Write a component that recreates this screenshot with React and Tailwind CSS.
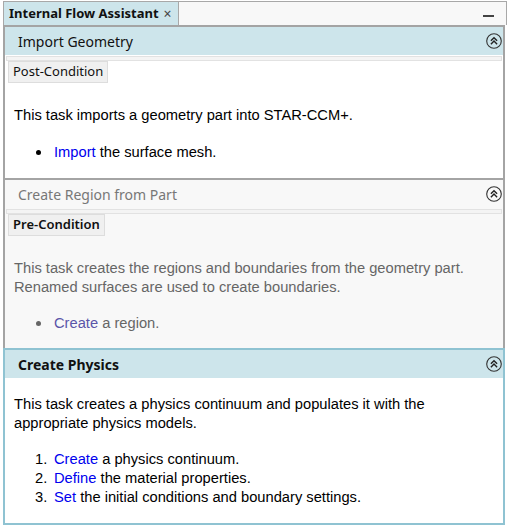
import React from 'react';

const ui = { fontFamily: '"Segoe UI", "Noto Sans", sans-serif' };
const body = { fontFamily: '"Liberation Sans", Arial, sans-serif' };

function CollapseIcon() {
  return (
    <svg width="16" height="16" viewBox="0 0 16 16" className="shrink-0">
      <circle cx="8" cy="8" r="7.3" fill="none" stroke="#333" strokeWidth="1.1" />
      <path d="M4.9 7.8 L8 4.7 L11.1 7.8 M4.9 11.2 L8 8.1 L11.1 11.2" fill="none" stroke="#222" strokeWidth="1.4" />
    </svg>
  );
}

function Header({ title, bg, color, bold }) {
  return (
    <div className={`flex h-[28px] items-center justify-between pl-[13px] pr-[1px] ${bg}`}>
      <span style={ui} className={`text-[14px] ${color} ${bold ? 'font-bold' : ''}`}>{title}</span>
      <CollapseIcon />
    </div>
  );
}

function Strip() {
  return <div className="mx-[1px] mt-[1px] h-[5px] border border-[#e2e2e2] bg-[#f4f4f4]" />;
}

function Tag({ label, bold }) {
  return (
    <div className="flex">
      <div
        style={ui}
        className={`ml-[3px] flex h-[22px] items-center border border-[#dddddd] bg-[#f0f0f0] px-[4px] text-[13px] text-[#111] ${bold ? 'font-semibold' : ''}`}
      >
        {label}
      </div>
    </div>
  );
}

export default function App() {
  return (
    <div className="relative h-[528px] w-[508px] overflow-hidden bg-white">
      {/* tab bar */}
      <div className="ml-[3px] mr-[1px] mt-[1px] flex h-[24px] border-x border-t border-[#a8a8a8] bg-[#f8f8f8]">
        <div style={ui} className="flex items-center gap-[5px] border-r border-[#a8a8a8] bg-[#cde5eb] pl-[5px] pr-[6px] text-[13px] font-bold text-[#111]">
          Internal Flow Assistant
          <span className="text-[14px] font-normal text-[#444]">×</span>
        </div>
        <div className="flex-1" />
        <div className="mr-[12px] mt-[13px] h-[2px] w-[11px] bg-[#444]" />
      </div>

      <div className="ml-[3px] w-[502px] border-x-2 border-t-2 border-[#a4a4a4]">
        {/* Import Geometry */}
        <div className="border-b-2 border-[#a4a4a4] bg-white pb-[16px]">
          <Header title="Import Geometry" bg="bg-[#cde5eb]" color="text-[#111]" />
          <Strip />
          <Tag label="Post-Condition" />
          <p style={body} className="mt-[23px] pl-[9px] text-[14.7px] leading-[19px] text-black">
            This task imports a geometry part into STAR-CCM+.
          </p>
          <ul style={body} className="mt-[18px] pl-[49px] text-[14.7px] leading-[19px] text-black">
            <li className="relative">
              <span className="absolute left-[-18px] top-[7px] h-[5px] w-[5px] rounded-full bg-black" />
              <span className="text-[#0000ee]">Import</span> the surface mesh.
            </li>
          </ul>
        </div>

        {/* Create Region from Part */}
        <div className="bg-[#f8f8f8] pb-[15px]">
          <Header title="Create Region from Part" bg="bg-[#f8f8f8]" color="text-[#777]" />
          <Strip />
          <Tag label="Pre-Condition" bold />
          <p style={body} className="mt-[23px] pl-[9px] text-[14.7px] leading-[19px] text-[#666]">
            This task creates the regions and boundaries from the geometry part.
            <br />
            Renamed surfaces are used to create boundaries.
          </p>
          <ul style={body} className="mt-[17px] pl-[49px] text-[14.7px] leading-[19px] text-[#666]">
            <li className="relative">
              <span className="absolute left-[-18px] top-[7px] h-[5px] w-[5px] rounded-full bg-[#666]" />
              <span className="text-[#5a55a8]">Create</span> a region.
            </li>
          </ul>
        </div>
      </div>

      {/* Create Physics */}
      <div className="ml-[3px] w-[502px] border-2 border-[#8fc3d2] bg-white pb-[16px]">
        <Header title="Create Physics" bg="bg-[#cde5eb]" color="text-[#111]" bold />
        <p style={body} className="mt-[17px] pl-[9px] text-[14.7px] leading-[19px] text-black">
          This task creates a physics continuum and populates it with the
          <br />
          appropriate physics models.
        </p>
        <ol style={body} className="mt-[17px] pl-[49px] text-[14.7px] leading-[19px] text-black">
          {[
            ['Create', ' a physics continuum.'],
            ['Define', ' the material properties.'],
            ['Set', ' the initial conditions and boundary settings.'],
          ].map(([link, rest], i) => (
            <li key={link} className="relative">
              <span className="absolute left-[-19px]">{i + 1}.</span>
              <span className="text-[#0000ee]">{link}</span>
              {rest}
            </li>
          ))}
        </ol>
      </div>
    </div>
  );
}
